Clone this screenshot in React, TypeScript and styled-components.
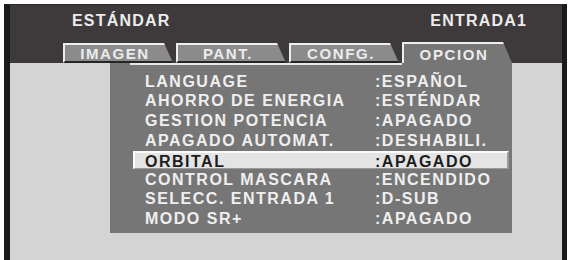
import React from "react";
import styled, { createGlobalStyle, css } from "styled-components";

const Global = createGlobalStyle`
  html, body {
    margin: 0;
    background: #ffffff;
  }
  body {
    font-family: "Liberation Sans", Arial, sans-serif;
  }
`;

const Screen = styled.div`
  box-sizing: border-box;
  margin: 4px 0 0 4px;
  width: 563px;
  height: 256px;
  border-left: 6px solid #1b1a1a;
  border-right: 5px solid #1b1a1a;
  border-top: 1px solid #2a2828;
  background: #d4d4d4;
  display: flex;
  flex-direction: column;
`;

const Header = styled.div`
  background: #3e3a3b;
  height: 58px;
  display: flex;
  flex-direction: column;
`;

const Titles = styled.div`
  height: 37px;
  box-sizing: border-box;
  padding: 7px 35px 0 62px;
  display: flex;
  justify-content: space-between;
  color: #ececec;
  font-weight: 700;
  font-size: 16px;
  line-height: 18px;
  letter-spacing: 1.2px;
`;

const Tabs = styled.div`
  height: 21px;
  margin-left: 53px;
  display: flex;
  align-items: flex-end;
  gap: 3px;
`;

const Tab = styled.div<{ active?: boolean }>`
  box-sizing: border-box;
  width: 110px;
  height: 20px;
  padding-right: 8px;
  display: flex;
  align-items: center;
  justify-content: center;
  background: #8b8b8b;
  border-top: 2px solid #eeeeee;
  border-left: 2px solid #eeeeee;
  border-bottom: 2px solid #262424;
  clip-path: polygon(0 0, calc(100% - 9px) 0, 100% 100%, 0 100%);
  color: #ececec;
  font-weight: 700;
  font-size: 15px;
  letter-spacing: 1.6px;
  ${(p) =>
    p.active &&
    css`
      height: 21px;
      background: #767676;
      border-bottom: none;
      padding-top: 1px;
    `}
`;

const Body = styled.div`
  flex: 1;
  display: flex;
  padding-left: 100px;
`;

const Panel = styled.div`
  width: 402px;
  height: 170px;
  background: #767676;
  display: flex;
  flex-direction: column;
`;

const TopRule = styled.div`
  margin-left: 20px;
  width: 272px;
  height: 2px;
  background: #e8e8e8;
`;

const List = styled.div`
  margin: 7px 3px 0 23px;
  display: flex;
  flex-direction: column;
`;

const Row = styled.div<{ selected?: boolean }>`
  box-sizing: border-box;
  height: 19.6px;
  padding-left: 12px;
  display: grid;
  grid-template-columns: 230px 1fr;
  align-items: center;
  color: #efefef;
  font-weight: 700;
  font-size: 16px;
  letter-spacing: 1.5px;
  white-space: nowrap;
  ${(p) =>
    p.selected &&
    css`
      height: 18px;
      margin: 1px 0 0.6px;
      padding-left: 10px;
      background: #e4e4e4;
      border-top: 2px solid #fbfbfb;
      border-left: 2px solid #fbfbfb;
      border-bottom: 1px solid #9a9a9a;
      border-right: 2px solid #9a9a9a;
      color: #1c1c1c;
    `}
`;

const items: [string, string][] = [
  ["LANGUAGE", ":ESPAÑOL"],
  ["AHORRO DE ENERGIA", ":ESTÉNDAR"],
  ["GESTION POTENCIA", ":APAGADO"],
  ["APAGADO AUTOMAT.", ":DESHABILI."],
  ["ORBITAL", ":APAGADO"],
  ["CONTROL MASCARA", ":ENCENDIDO"],
  ["SELECC. ENTRADA 1", ":D-SUB"],
  ["MODO SR+", ":APAGADO"],
];

const tabs = ["IMAGEN", "PANT.", "CONFG.", "OPCION"];

export default function App() {
  return (
    <>
      <Global />
      <Screen>
        <Header>
          <Titles>
            <span>ESTÁNDAR</span>
            <span>ENTRADA1</span>
          </Titles>
          <Tabs>
            {tabs.map((t) => (
              <Tab key={t} active={t === "OPCION"}>
                {t}
              </Tab>
            ))}
          </Tabs>
        </Header>
        <Body>
          <Panel>
            <TopRule />
            <List>
              {items.map(([label, value]) => (
                <Row key={label} selected={label === "ORBITAL"}>
                  <span>{label}</span>
                  <span>{value}</span>
                </Row>
              ))}
            </List>
          </Panel>
        </Body>
      </Screen>
    </>
  );
}
